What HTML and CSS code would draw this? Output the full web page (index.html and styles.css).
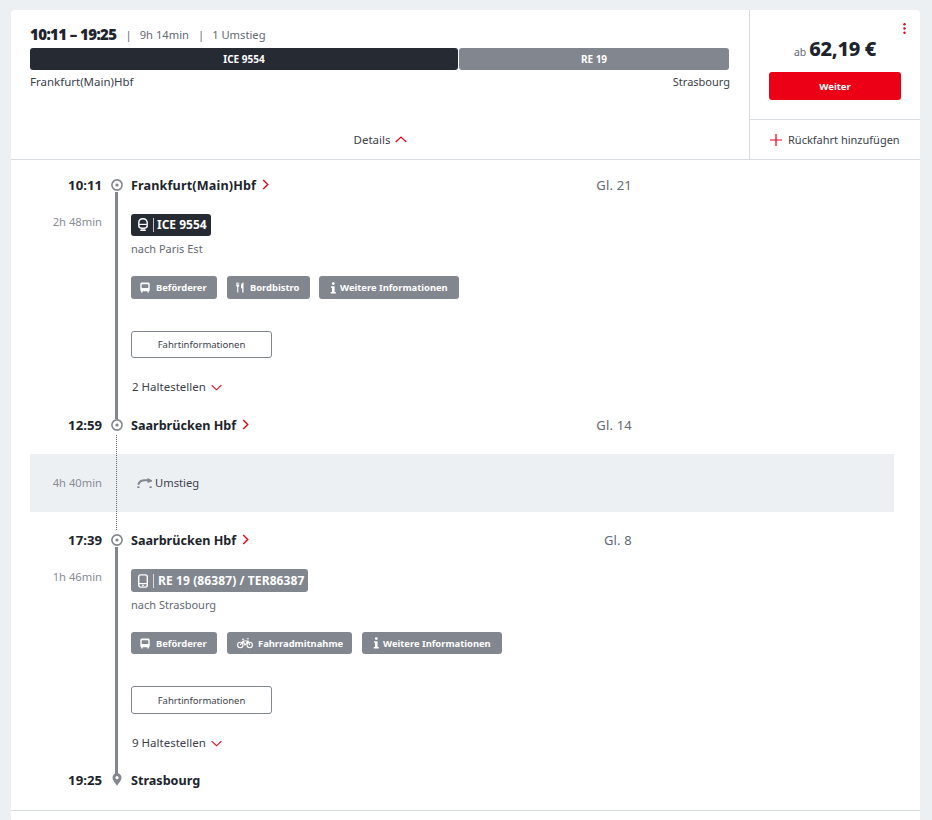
FILE: index.html
```html
<!DOCTYPE html>
<html lang="de">
<head>
<meta charset="utf-8">
<title>Verbindung</title>
<link rel="stylesheet" href="styles.css">
</head>
<body>
<svg class="defs" width="0" height="0" aria-hidden="true">
  <symbol id="i-ice" viewBox="0 0 12 14"><path d="M6 .8C3.200.8 1.800 2.400 1.800 4.800v2.800c0 1.500 1.100 2.600 2.700 2.600h3c1.600 0 2.700-1.100 2.700-2.600V4.800C10.200 2.400 8.800.8 6 .8z" fill="none" stroke="currentColor" stroke-width="1.400"/><path d="M2.200 5.800h7.600v1.200H2.200z" fill="currentColor"/><path d="M3.800 11.200h4.400l.8 1.800H3z" fill="currentColor"/></symbol>
  <symbol id="i-re" viewBox="0 0 12 14"><rect x="1.700" y=".9" width="8.600" height="12.200" rx="2" fill="none" stroke="currentColor" stroke-width="1.400"/><path d="M2 9.600h8" stroke="currentColor" stroke-width="1.200"/><circle cx="6" cy="11.300" r=".9" fill="currentColor"/></symbol>
  <symbol id="i-bus" viewBox="0 0 10 11"><path d="M2 .5h6C9 .5 9.700 1.200 9.700 2.200V8c0 .6-.3 1-.8 1.100v1.400H7.400V9.200H2.600v1.300H1.100V9.100C.6 9 .3 8.600.3 8V2.200C.3 1.200 1 .5 2 .5z" fill="currentColor"/><rect x="1.700" y="2.300" width="6.600" height="3.700" rx=".6" fill="#82868f"/></symbol>
  <symbol id="i-food" viewBox="0 0 8 11"><path d="M.3.500v3c0 .7.400 1.200.9 1.400v5.600h1.100V4.900c.5-.2.900-.7.900-1.400v-3h-.7v2.600H2V.500h-.7v2.600H.9V.500zM7.500.500C5.900.700 5 2.100 5 4v2.300h1.200v4.200h1.300z" fill="currentColor"/></symbol>
  <symbol id="i-info" viewBox="0 0 7 12"><circle cx="3.300" cy="1.600" r="1.400" fill="currentColor"/><path d="M1 4.300h3.600v5.800h1.200v1.400H.7v-1.400H2V5.700H1z" fill="currentColor"/></symbol>
  <symbol id="i-bike" viewBox="0 0 16 12"><circle cx="3.300" cy="8" r="2.700" fill="none" stroke="currentColor" stroke-width="1.100"/><circle cx="12.700" cy="8" r="2.700" fill="none" stroke="currentColor" stroke-width="1.100"/><path d="M3.300 8L6 4h5L12.700 8M6 4L8 8l3-4M5 2.300h2.200M9.800 1.800h2" fill="none" stroke="currentColor" stroke-width="1.100"/></symbol>
  <symbol id="i-stop" viewBox="0 0 12 12"><circle cx="6" cy="6" r="5.100" fill="#fff" stroke="#82868f" stroke-width="1.600"/><circle cx="6" cy="6" r="1.600" fill="#82868f"/></symbol>
  <symbol id="i-right" viewBox="0 0 7 11"><path d="M1.200 1l4.500 4.500L1.200 10" fill="none" stroke="#ec0016" stroke-width="1.400"/></symbol>
  <symbol id="i-down" viewBox="0 0 12 7"><path d="M.7 1l5.300 5 5.300-5" fill="none" stroke="#ec0016" stroke-width="1.200"/></symbol>
</svg>

<main class="card">
  <header class="summary">
    <section class="overview">
      <div class="headline">
        <strong class="times">10:11 – 19:25</strong>
        <span class="sep">|</span><span>9h 14min</span>
        <span class="sep">|</span><span>1 Umstieg</span>
      </div>
      <div class="bar">
        <div class="bar-part bar-ice" style="flex-grow:168">ICE 9554</div>
        <div class="bar-part bar-re" style="flex-grow:106">RE 19</div>
      </div>
      <div class="ends"><span>Frankfurt(Main)Hbf</span><span class="end-dest">Strasbourg</span></div>
      <div class="details">Details
        <svg class="chev-up" width="12" height="7" viewBox="0 0 12 7"><path d="M.7 6L6 1l5.300 5" fill="none" stroke="#ec0016" stroke-width="1.200"/></svg>
      </div>
    </section>
    <aside class="offer">
      <div class="offer-main">
        <svg class="kebab" width="3" height="11" viewBox="0 0 3 11"><circle cx="1.500" cy="1.200" r="1.200" fill="#ec0016"/><circle cx="1.500" cy="5.500" r="1.200" fill="#ec0016"/><circle cx="1.500" cy="9.800" r="1.200" fill="#ec0016"/></svg>
        <div class="price"><span class="ab">ab</span> <strong>62,19 €</strong></div>
        <button class="cta">Weiter</button>
      </div>
      <div class="return">
        <svg width="12" height="12" viewBox="0 0 12 12"><path d="M6 0v12M0 6h12" stroke="#ec0016" stroke-width="1.200"/></svg>
        <span>Rückfahrt hinzufügen</span>
      </div>
    </aside>
  </header>

  <section class="timeline">
    <div class="stop">
      <time>10:11</time>
      <div class="marker"><svg width="12" height="12"><use href="#i-stop"/></svg></div>
      <div class="stop-name stop-name-wide">Frankfurt(Main)Hbf <svg class="chev" width="7" height="11"><use href="#i-right"/></svg></div>
      <div class="platform">Gl. 21</div>
    </div>
    <div class="leg">
      <div class="duration">2h 48min</div>
      <div class="rail"></div>
      <div class="leg-body">
        <div class="train train-dark"><svg width="12" height="14"><use href="#i-ice"/></svg><span class="train-name">ICE 9554</span></div>
        <div class="direction">nach Paris Est</div>
        <div class="chips">
          <div class="chip chip-a"><svg width="10" height="11"><use href="#i-bus"/></svg>Beförderer</div>
          <div class="chip chip-b"><svg width="8" height="11"><use href="#i-food"/></svg>Bordbistro</div>
          <div class="chip chip-c"><svg width="7" height="12"><use href="#i-info"/></svg>Weitere Informationen</div>
        </div>
        <button class="ride-info">Fahrtinformationen</button>
        <div class="halts">2 Haltestellen <svg width="11" height="7"><use href="#i-down"/></svg></div>
      </div>
    </div>
    <div class="stop">
      <time>12:59</time>
      <div class="marker"><svg width="12" height="12"><use href="#i-stop"/></svg></div>
      <div class="stop-name">Saarbrücken Hbf <svg class="chev" width="7" height="11"><use href="#i-right"/></svg></div>
      <div class="platform">Gl. 14</div>
    </div>
    <div class="transfer">
      <div class="band">
        <div class="duration">4h 40min</div>
        <div></div>
        <div class="transfer-label">
          <svg width="15" height="10" viewBox="0 0 15 10"><path d="M1.300 6.800C2 3.500 4.500 2.200 8 2.200h3" fill="none" stroke="#82868f" stroke-width="2"/><path d="M10.500 0L15 2.200v1.300l-4.500 1.500z" fill="#82868f"/><rect x="0.300" y="8.300" width="2.200" height="1.700" fill="#82868f"/><rect x="12.500" y="8.300" width="2.200" height="1.700" fill="#82868f"/></svg>
          Umstieg
        </div>
      </div>
    </div>
    <div class="stop">
      <time>17:39</time>
      <div class="marker"><svg width="12" height="12"><use href="#i-stop"/></svg></div>
      <div class="stop-name">Saarbrücken Hbf <svg class="chev" width="7" height="11"><use href="#i-right"/></svg></div>
      <div class="platform">Gl. 8</div>
    </div>
    <div class="leg leg-regional">
      <div class="duration">1h 46min</div>
      <div class="rail"></div>
      <div class="leg-body">
        <div class="train train-grey"><svg width="12" height="14"><use href="#i-re"/></svg><span class="train-name">RE 19 (86387) / TER86387</span></div>
        <div class="direction">nach Strasbourg</div>
        <div class="chips">
          <div class="chip chip-a"><svg width="10" height="11"><use href="#i-bus"/></svg>Beförderer</div>
          <div class="chip chip-d"><svg width="16" height="12"><use href="#i-bike"/></svg>Fahrradmitnahme</div>
          <div class="chip chip-c"><svg width="7" height="12"><use href="#i-info"/></svg>Weitere Informationen</div>
        </div>
        <button class="ride-info">Fahrtinformationen</button>
        <div class="halts">9 Haltestellen <svg width="11" height="7"><use href="#i-down"/></svg></div>
      </div>
    </div>
    <div class="stop">
      <time>19:25</time>
      <div class="marker"><svg class="pin" width="10" height="13" viewBox="0 0 10 13"><path d="M5 .3C2.400.3.500 2.200.500 4.700c0 2.700 2.800 5.500 4.500 8 1.700-2.500 4.500-5.300 4.500-8C9.500 2.200 7.600.3 5 .3z" fill="#82868f"/><circle cx="5" cy="4.700" r="1.600" fill="#fff"/></svg></div>
      <div class="stop-name">Strasbourg</div>
      <div class="platform"></div>
    </div>
  </section>
  <div class="card-foot"></div>
</main>
</body>
</html>
```

FILE: styles.css
```css
* { box-sizing: border-box; }
html, body { margin: 0; height: 820px; overflow: hidden; }
body {
  background: #edf0f3;
  padding: 10px 12px 0 11px;
  font-family: "Noto Sans", "Liberation Sans", sans-serif;
  font-size: 11.5px;
  color: #3c414b;
}
.defs { position: absolute; }
svg { display: block; flex: none; }

.card {
  background: #fff;
  border-radius: 4px 4px 0 0;
  height: 810px;
}

/* Summary */
.summary {
  display: grid;
  grid-template-columns: 1fr 171px;
  height: 150px;
  border-bottom: 1px solid #d7dce1;
}
.overview {
  display: flex;
  flex-direction: column;
  padding: 15px 20px 0 19px;
}
.headline {
  display: flex;
  align-items: center;
  height: 18px;
  color: #646973;
  font-size: 11.2px;
}
.times {
  color: #20242c;
  font-size: 15px;
  font-weight: 900;
  letter-spacing: -0.6px;
  margin-right: 9px;
}
.sep { margin: 0 8px 0 0; color: #646973; }
.headline span + .sep { margin-left: 9px; }
.bar {
  display: flex;
  gap: 1px;
  height: 22px;
  margin-top: 5px;
}
.bar-part {
  flex-basis: 0;
  border-radius: 3px;
  color: #fff;
  font-size: 10px;
  font-weight: 700;
  display: flex;
  align-items: center;
  justify-content: center;
}
.bar-ice { background: #252a33; }
.bar-re { background: #82868f; }
.ends {
  display: flex;
  justify-content: space-between;
  margin-top: 4px;
  line-height: 16px;
}
.end-dest { font-size: 11px; margin-right: -1px; }
.details {
  margin-top: auto;
  height: 40px;
  display: flex;
  align-items: center;
  justify-content: center;
  gap: 5px;
  padding-left: 2px;
}
.offer {
  display: flex;
  flex-direction: column;
  border-left: 1px solid #d7dce1;
}
.offer-main {
  position: relative;
  height: 110px;
  padding: 26px 19px 0;
  border-bottom: 1px solid #d7dce1;
}
.kebab { position: absolute; top: 13px; right: 14px; }
.price {
  text-align: center;
  color: #20242c;
  line-height: 26px;
  height: 26px;
}
.price strong { font-size: 20px; font-weight: 800; letter-spacing: -0.3px; }
.ab { color: #646973; font-size: 10.5px; }
.cta {
  display: block;
  width: 132px;
  height: 28px;
  margin: 10px 0 0;
  border: 0;
  border-radius: 3px;
  background: #ec0016;
  color: #fff;
  font: 700 9.5px "Noto Sans", sans-serif;
}
.return {
  flex: 1;
  display: flex;
  align-items: center;
  gap: 6px;
  padding-left: 20px;
  font-size: 11px;
}

/* Timeline */
.timeline { padding: 15px 26px 0 19px; }
.stop, .leg, .band {
  display: grid;
  grid-template-columns: 72px 29px 1fr;
}
.stop {
  grid-template-columns: 72px 29px 465px 36px;
  height: 20px;
  align-items: center;
}
.stop time {
  text-align: right;
  color: #20242c;
  font-size: 13.2px;
  font-weight: 700;
}
.marker {
  position: relative;
  z-index: 1;
  display: flex;
  justify-content: center;
}
.pin { margin-top: -1px; }
.stop-name {
  display: flex;
  align-items: center;
  gap: 6px;
  color: #20242c;
  font-size: 12.6px;
  font-weight: 700;
}
.stop-name-wide { letter-spacing: 0.15px; }
.chev { margin-top: -2px; }
.platform {
  text-align: right;
  color: #646973;
  font-size: 13px;
  letter-spacing: 0.2px;
  white-space: nowrap;
}
.leg { height: 220px; }
.duration {
  text-align: right;
  color: #878c96;
  font-size: 11.2px;
  padding-top: 19px;
}
.rail {
  width: 3px;
  height: calc(100% + 7px);
  margin-top: -3px;
  justify-self: center;
  background: #82868f;
}
.leg-body { padding-top: 19px; }
.train {
  display: inline-flex;
  align-items: center;
  height: 22px;
  padding: 0 4px 0 6px;
  border-radius: 3px;
  color: #fff;
  font-size: 12px;
  font-weight: 700;
}
.train-dark { background: #252a33; }
.train-grey { background: #82868f; height: 23px; letter-spacing: 0.1px; }
.train-name {
  margin-left: 4px;
  padding-left: 3px;
  border-left: 1px solid rgba(255,255,255,.7);
  line-height: 14px;
}
.train-grey .train-name { padding-left: 4px; }
.direction {
  margin-top: 5px;
  line-height: 16px;
  color: #646973;
  font-size: 11px;
}
.chips {
  display: flex;
  gap: 10px;
  margin-top: 19px;
}
.leg-regional .chip { height: 22px; }
.leg-regional .ride-info { height: 28px; }
.chip {
  display: flex;
  align-items: center;
  height: 23px;
  border-radius: 3px;
  background: #82868f;
  color: #fff;
  font-size: 9.4px;
  font-weight: 700;
  padding-left: 9px;
  gap: 6px;
}
.chip-a { width: 86px; }
.chip-b { width: 83px; margin-right: -1px; }
.chip-c { width: 139.5px; padding-left: 11px; gap: 3px; }
.chip-d { width: 125px; padding-left: 10px; gap: 5px; }
.ride-info {
  display: block;
  width: 141px;
  height: 27px;
  margin-top: 32px;
  border: 1px solid #82868f;
  border-radius: 3px;
  background: #fff;
  color: #3c414b;
  font: 9.5px "Noto Sans", sans-serif;
}
.halts {
  display: flex;
  align-items: center;
  gap: 5px;
  margin-top: 21px;
  padding-left: 1px;
  line-height: 16px;
  color: #3c414b;
}

/* Transfer */
.transfer {
  position: relative;
  padding: 19px 0 18px;
}
.transfer::before {
  content: "";
  position: absolute;
  left: 86px;
  top: 0;
  bottom: 0;
  border-left: 1px dotted #646973;
  z-index: 1;
}
.band {
  height: 58px;
  padding-bottom: 1px;
  background: #edf0f3;
  align-items: center;
}
.band .duration { padding-top: 0; }
.transfer-label {
  display: flex;
  align-items: center;
  gap: 3px;
  padding-left: 6px;
  font-size: 11.2px;
  color: #3c414b;
}
.card-foot {
  margin-top: 20px;
  border-top: 1px solid #d7dce1;
}
```
